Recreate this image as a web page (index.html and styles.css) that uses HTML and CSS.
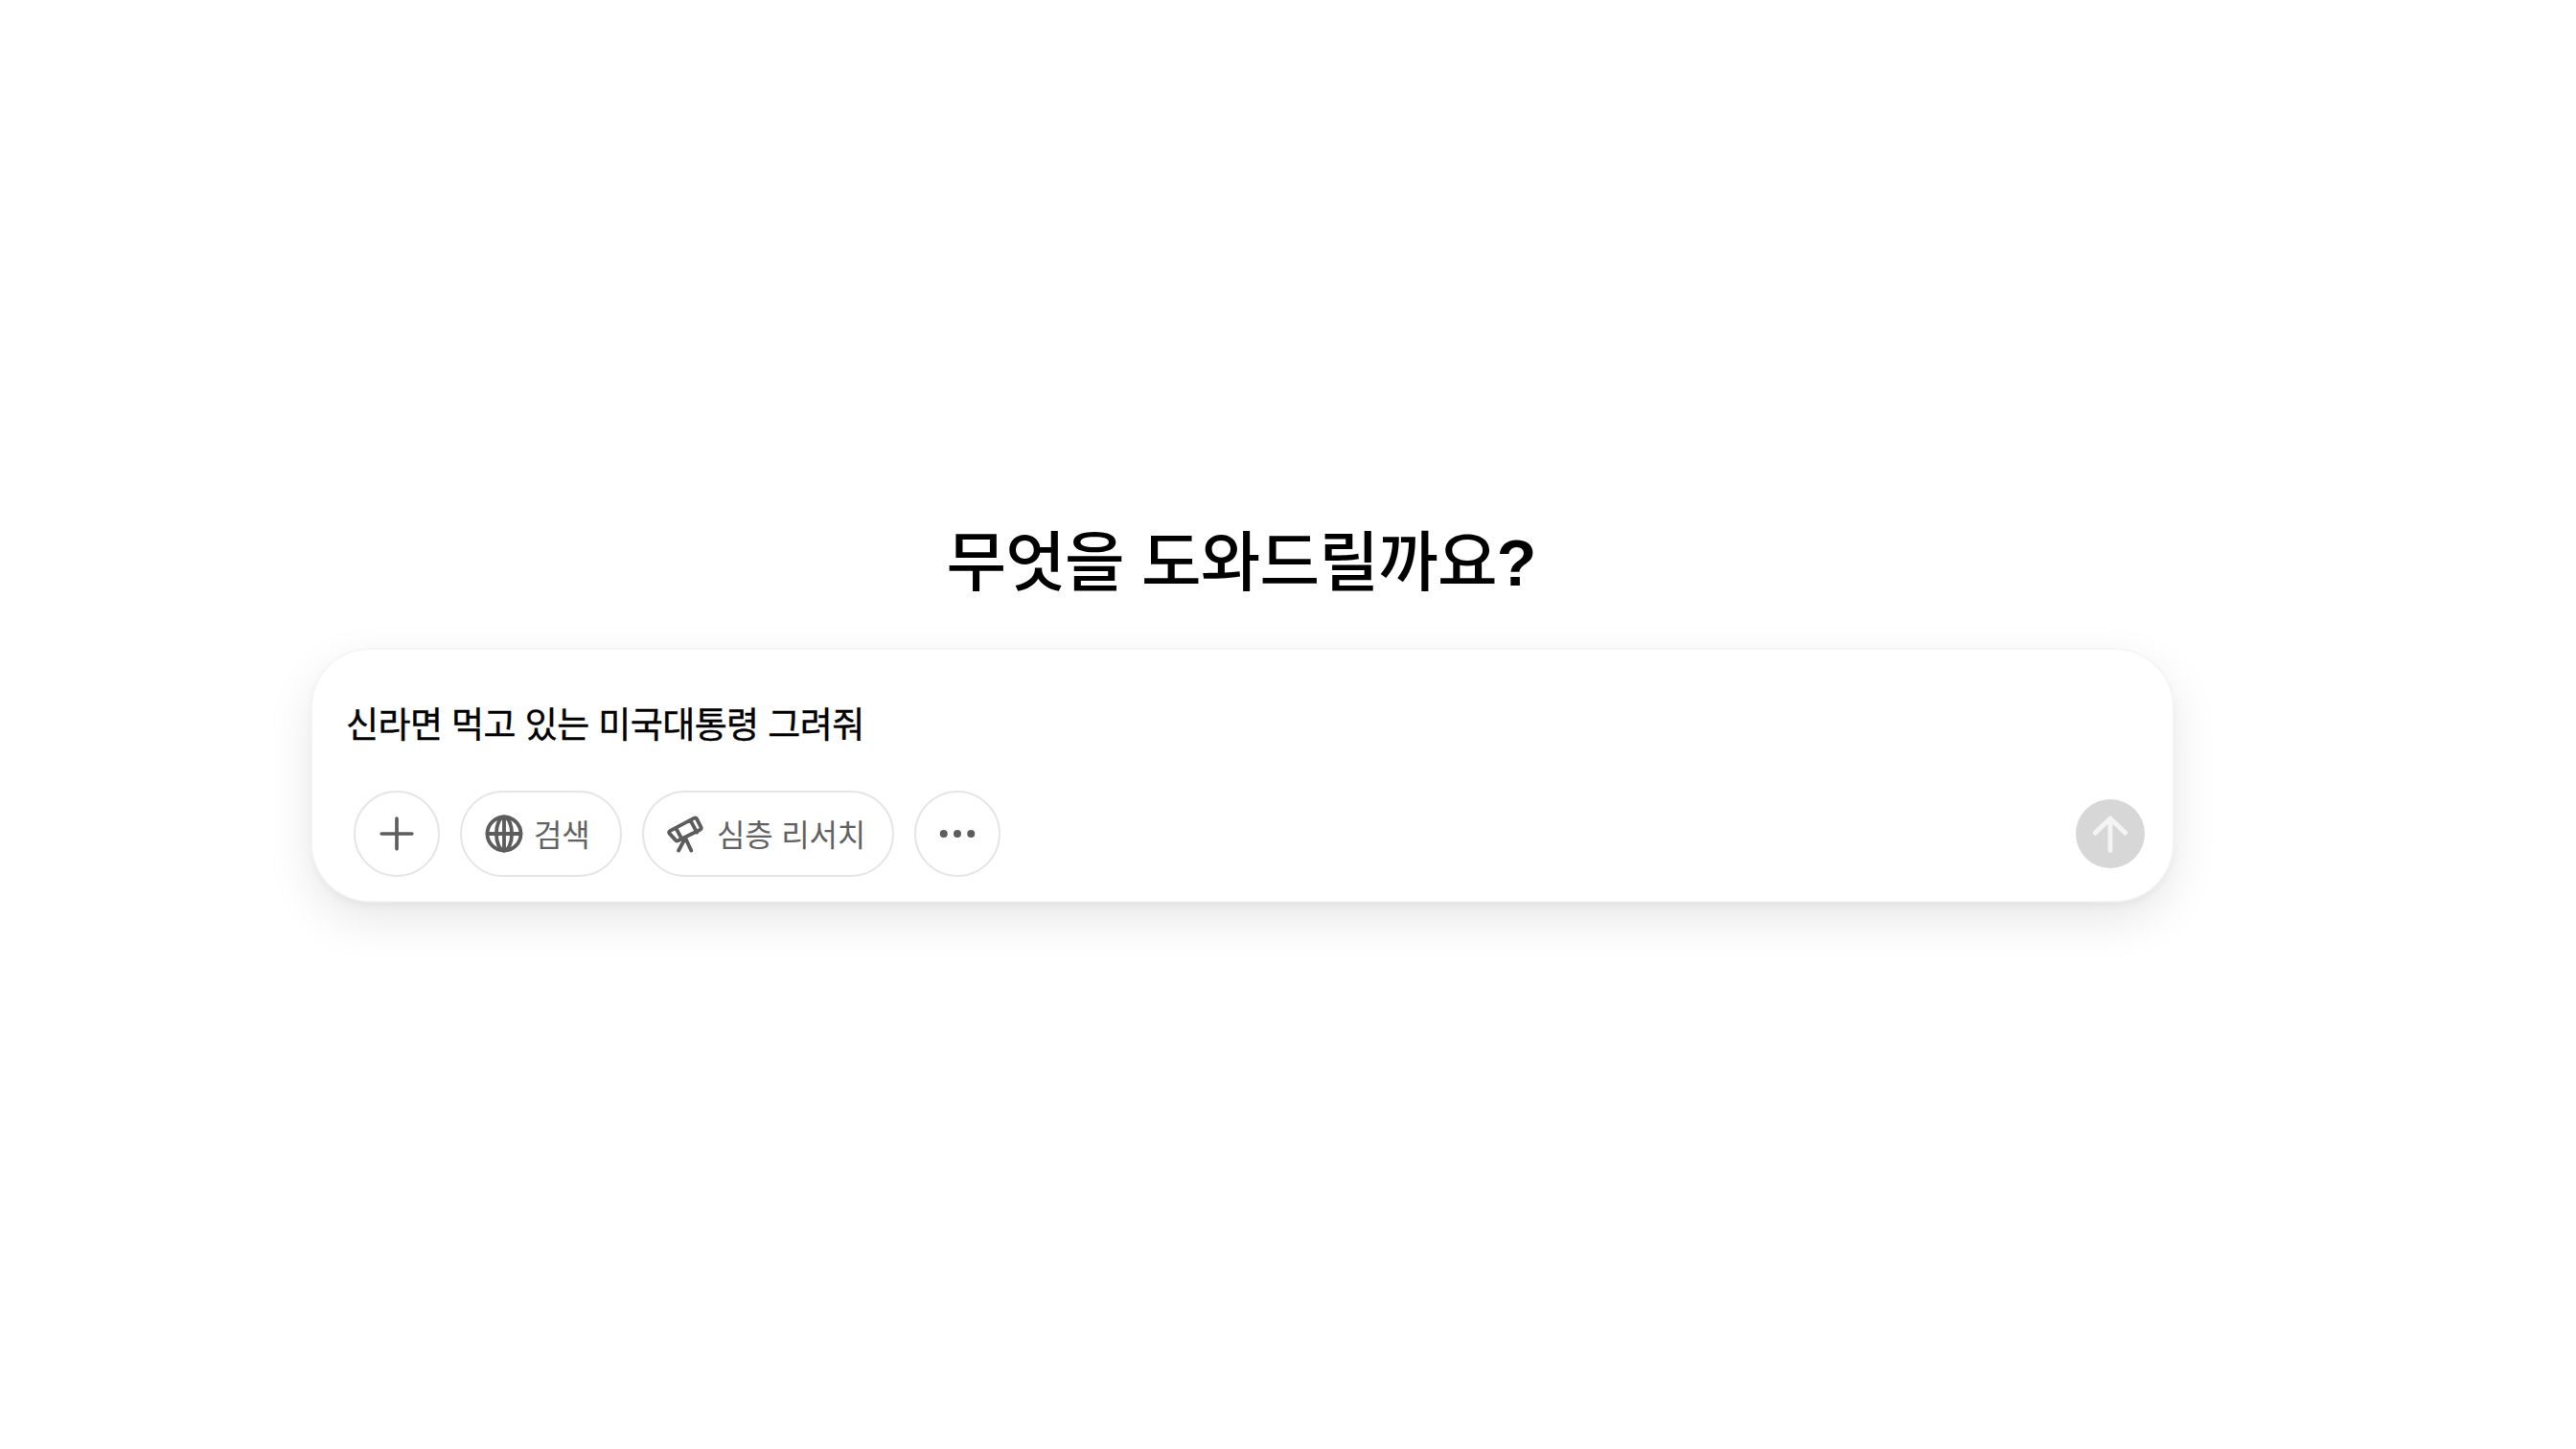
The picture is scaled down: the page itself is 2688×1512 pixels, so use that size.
FILE: index.html
```html
<!DOCTYPE html>
<html lang="ko">
<head>
<meta charset="utf-8">
<title>무엇을 도와드릴까요?</title>
<link rel="stylesheet" href="styles.css">
</head>
<body>
<main class="page">
  <h1 class="title">무엇을 도와드릴까요<span class="mark">?</span></h1>
  <section class="composer">
    <p class="prompt">신라면 먹고 있는 미국대통령 그려줘</p>
    <div class="toolbar">
      <button class="chip round" aria-label="추가">
        <svg class="icon plus" viewBox="0 0 24 24"><path d="M12 2.500v19M2.500 12h19"/></svg>
      </button>
      <button class="chip search">
        <svg class="icon" viewBox="0 0 24 24"><circle cx="12" cy="12" r="10"/><ellipse cx="12" cy="12" rx="4.600" ry="10"/><path d="M2 12h20M12 2v20"/></svg>
        <span class="label">검색</span>
      </button>
      <button class="chip deep">
        <svg class="icon scope" viewBox="0 0 24 24"><path d="M2.500 10.200 16.500 2.800c.8-.4 1.500-.2 1.900.5l2.300 4.500c.4.800.2 1.500-.6 1.900L7.300 16c-.8.400-1.500.2-1.900-.5L2 11.800c-.4-.7-.2-1.200.5-1.600ZM14.500 3.900l3.900 7.300M5.800 8.500l3 5.500M11.500 14.500l-4 7.500M11.500 14.500l3.500 7.500"/></svg>
        <span class="label">심층 리서치</span>
      </button>
      <button class="chip round" aria-label="더 보기">
        <svg class="dots" viewBox="0 0 40 10"><circle cx="5" cy="5" r="4.200"/><circle cx="20" cy="5" r="4.200"/><circle cx="35" cy="5" r="4.200"/></svg>
      </button>
      <button class="send" aria-label="보내기">
        <svg viewBox="0 0 24 24"><path d="M12 22V3M3 11.500 12 2.800l9 8.700"/></svg>
      </button>
    </div>
  </section>
</main>
</body>
</html>
```

FILE: styles.css
```css
* { box-sizing: border-box; }
html, body { margin: 0; height: 100%; background: #fff; }
body {
  font-family: "Noto Sans CJK KR", "Noto Sans", sans-serif;
  color: #000;
}
.page {
  display: flex;
  flex-direction: column;
  align-items: center;
  padding: 536px 421px 0 326px;
}
.title {
  margin: 0 3px 50px 0;
  font-size: 68px;
  line-height: 92px;
  font-weight: 500;
  letter-spacing: -0.800px;
}
.mark {
  font-family: "Liberation Sans", sans-serif;
  font-weight: 700;
  line-height: 0;
}
.composer {
  width: 1941px;
  height: 262px;
  padding: 51px 29px 25px 35px;
  display: flex;
  flex-direction: column;
  background: #fff;
  border-radius: 60px;
  box-shadow: 0 0 0 1.500px #f4f4f4, 0 18px 50px rgba(0, 0, 0, 0.1), 0 4px 10px rgba(0, 0, 0, 0.05);
}
.prompt {
  margin: 0;
  font-size: 37px;
  line-height: 50px;
  font-weight: 400;
  letter-spacing: -0.600px;
  color: #000;
  -webkit-text-stroke: 0.400px #000;
}
.toolbar {
  margin-top: auto;
  display: flex;
  align-items: center;
  gap: 21px;
  padding-left: 8px;
}
.chip {
  height: 90px;
  display: flex;
  align-items: center;
  justify-content: center;
  gap: 10px;
  padding: 0;
  background: #fff;
  border: 2.500px solid #e6e6e6;
  border-radius: 45px;
  color: #626262;
  font: inherit;
  font-size: 32px;
  letter-spacing: -0.200px;
}
.round { width: 90px; }
.search { width: 169px; justify-content: flex-start; padding-left: 23px; }
.deep { width: 263px; justify-content: flex-start; padding-left: 23px; gap: 11px; }
.label { padding-bottom: 3px; }
.icon {
  width: 42px;
  height: 42px;
  fill: none;
  stroke: #5d5d5d;
  stroke-width: 2.200;
  stroke-linecap: round;
  stroke-linejoin: round;
}
.plus { width: 40px; height: 40px; }
.dots { width: 38px; height: 10px; fill: #5d5d5d; }
.send {
  margin-left: auto;
  width: 72px;
  height: 72px;
  padding: 0;
  display: flex;
  align-items: center;
  justify-content: center;
  border: 0;
  border-radius: 50%;
  background: #d7d7d7;
}
.send svg {
  width: 42px;
  height: 42px;
  fill: none;
  stroke: #f4f4f4;
  stroke-width: 2.800;
  stroke-linecap: round;
  stroke-linejoin: round;
}
```
